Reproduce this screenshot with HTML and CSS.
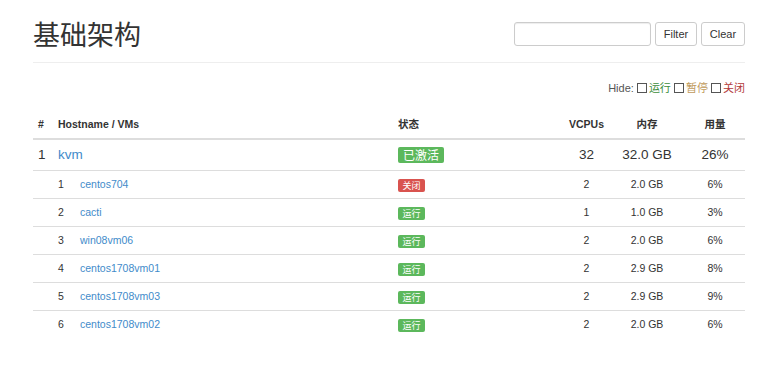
FILE: index.html
```html
<!DOCTYPE html>
<html lang="zh">
<head>
  <meta charset="UTF-8" />
  <title>基础架构</title>
  <link rel="stylesheet" href="styles.css">
</head>
<body>
  <div class="page">
    <header class="page-header">
      <h1>基础架构</h1>
      <form class="filter-form">
        <input type="text" class="filter-input">
        <button type="button" class="btn">Filter</button>
        <button type="button" class="btn">Clear</button>
      </form>
    </header>

    <div class="hide-bar">
      Hide:
      <label><span class="box"></span><span class="st-run">运行</span></label>
      <label><span class="box"></span><span class="st-pause">暂停</span></label>
      <label><span class="box"></span><span class="st-off">关闭</span></label>
    </div>

    <table class="vm-table">
      <colgroup>
        <col class="c-idx"><col class="c-name"><col class="c-state"><col class="c-cpu"><col class="c-mem"><col class="c-use">
      </colgroup>
      <thead>
        <tr>
          <th>#</th>
          <th>Hostname / VMs</th>
          <th>状态</th>
          <th class="num">VCPUs</th>
          <th class="num">内存</th>
          <th class="num">用量</th>
        </tr>
      </thead>
      <tbody>
        <tr class="host">
          <td>1</td>
          <td><a href="#">kvm</a></td>
          <td><span class="label label-ok">已激活</span></td>
          <td class="num">32</td>
          <td class="num">32.0 GB</td>
          <td class="num">26%</td>
        </tr>
        <tr>
          <td></td>
          <td><span class="vm-idx">1</span><a href="#">centos704</a></td>
          <td><span class="label label-off">关闭</span></td>
          <td class="num">2</td>
          <td class="num">2.0 GB</td>
          <td class="num">6%</td>
        </tr>
        <tr>
          <td></td>
          <td><span class="vm-idx">2</span><a href="#">cacti</a></td>
          <td><span class="label label-ok">运行</span></td>
          <td class="num">1</td>
          <td class="num">1.0 GB</td>
          <td class="num">3%</td>
        </tr>
        <tr>
          <td></td>
          <td><span class="vm-idx">3</span><a href="#">win08vm06</a></td>
          <td><span class="label label-ok">运行</span></td>
          <td class="num">2</td>
          <td class="num">2.0 GB</td>
          <td class="num">6%</td>
        </tr>
        <tr>
          <td></td>
          <td><span class="vm-idx">4</span><a href="#">centos1708vm01</a></td>
          <td><span class="label label-ok">运行</span></td>
          <td class="num">2</td>
          <td class="num">2.9 GB</td>
          <td class="num">8%</td>
        </tr>
        <tr>
          <td></td>
          <td><span class="vm-idx">5</span><a href="#">centos1708vm03</a></td>
          <td><span class="label label-ok">运行</span></td>
          <td class="num">2</td>
          <td class="num">2.9 GB</td>
          <td class="num">9%</td>
        </tr>
        <tr>
          <td></td>
          <td><span class="vm-idx">6</span><a href="#">centos1708vm02</a></td>
          <td><span class="label label-ok">运行</span></td>
          <td class="num">2</td>
          <td class="num">2.0 GB</td>
          <td class="num">6%</td>
        </tr>
      </tbody>
    </table>
  </div>
</body>
</html>
```

FILE: styles.css
```css
body {
  margin: 0;
  background: #fff;
  color: #333;
  font-family: "Liberation Sans", Arial, "Noto Sans CJK SC", sans-serif;
  font-size: 10.5px;
  line-height: 1.43;
}

a {
  color: #428bca;
  text-decoration: none;
}

.page {
  padding: 0 20px 0 33px;
}

.page-header {
  display: flex;
  align-items: center;
  justify-content: space-between;
  height: 40px;
  padding: 14px 0 8px;
  border-bottom: 1px solid #eee;
}

.page-header h1 {
  margin: 0;
  font-size: 27px;
  font-weight: normal;
  line-height: 40px;
  font-family: "Noto Sans CJK SC", sans-serif;
}

.filter-form {
  display: flex;
  gap: 4px;
}

.filter-input {
  box-sizing: border-box;
  width: 137px;
  height: 24px;
  margin: 0;
  border: 1px solid #ccc;
  border-radius: 3px;
  box-shadow: inset 0 1px 1px rgba(0, 0, 0, 0.075);
}

.btn {
  box-sizing: border-box;
  height: 24px;
  padding: 0 6px;
  border: 1px solid #ccc;
  border-radius: 3px;
  background: #fff;
  color: #333;
  font-family: inherit;
  font-size: 11px;
}

.btn:first-of-type {
  width: 42px;
}

.btn:last-of-type {
  width: 44px;
}

.hide-bar {
  margin-top: 18px;
  text-align: right;
  font-size: 11px;
  line-height: 15px;
  color: #555;
}

.hide-bar .box {
  display: inline-block;
  box-sizing: border-box;
  width: 10px;
  height: 10px;
  margin-right: 2px;
  border: 1px solid #555;
  vertical-align: -1px;
}

.st-run {
  color: #3c8d3c;
}

.st-pause {
  color: #c09a5b;
}

.st-off {
  color: #b33a3a;
}

.vm-table {
  width: 100%;
  margin-top: 15px;
  border-collapse: collapse;
  table-layout: fixed;
}

.c-idx { width: 19px; }
.c-name { width: 340px; }
.c-state { width: 172px; }
.c-cpu { width: 45px; }
.c-mem { width: 76px; }
.c-use { width: 60px; }

.vm-table th,
.vm-table td {
  padding: 6px;
  text-align: left;
  vertical-align: middle;
  white-space: nowrap;
}

.vm-table th:first-child,
.vm-table td:first-child {
  padding-left: 5px;
  padding-right: 0;
}

.vm-table th {
  font-weight: bold;
  border-bottom: 2px solid #ddd;
}

.vm-table td {
  border-top: 1px solid #ddd;
}

.vm-table tbody tr:first-child td {
  border-top: 0;
}

.vm-table .num {
  text-align: center;
  padding-left: 2px;
  padding-right: 2px;
}

.vm-table .host td {
  font-size: 13.5px;
  line-height: 18px;
}

.vm-idx {
  display: inline-block;
  width: 22px;
}

.label {
  display: inline-block;
  color: #fff;
  border-radius: 2px;
  font-family: "Noto Sans CJK SC", sans-serif;
  font-size: 9px;
  line-height: 13px;
  padding: 0 4.5px;
  vertical-align: middle;
}

.host .label {
  font-size: 12px;
  line-height: 16px;
  padding: 0 5px;
}

.label-ok {
  background: #5cb85c;
}

.label-off {
  background: #d9534f;
}
```
